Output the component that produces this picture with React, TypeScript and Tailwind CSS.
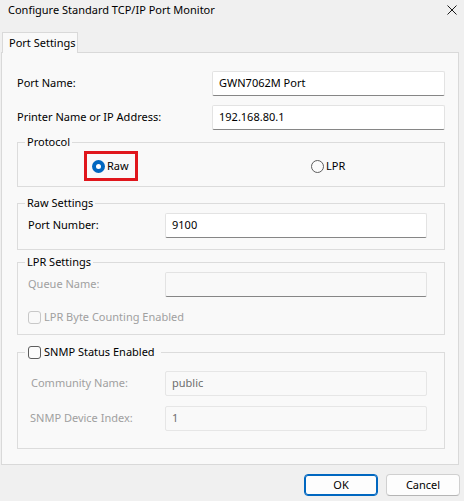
import React from "react";

const font = { fontFamily: '"Noto Sans", "Liberation Sans", sans-serif' };

function TextBox({ value, width, active = true, disabled = false }: { value?: string; width: string; active?: boolean; disabled?: boolean }) {
  const base = "h-[25px] flex items-center pl-[6px] rounded-[2px] border text-[11px] ";
  const look = disabled
    ? "bg-[#f9f9f9] border-[#e6e6e6] text-[#6d6d6d]"
    : active
    ? "bg-white border-[#e3e3e3] border-b-[#868686] text-black"
    : "bg-[#f9f9f9] border-[#e3e3e3] border-b-[#868686] text-black";
  return <div className={base + look + " " + width}>{value}</div>;
}

function Group({ title, legend, className, children }: { title?: string; legend?: React.ReactNode; className: string; children?: React.ReactNode }) {
  return (
    <div className={"relative border border-[#dcdcdc] " + className}>
      <div className="absolute -top-[9px] left-[7px] bg-[#f9f9f9] px-[2px] text-[11px] leading-[16px] text-black flex items-center whitespace-nowrap">
        {legend ?? title}
      </div>
      {children}
    </div>
  );
}

function CheckBox({ disabled = false }: { disabled?: boolean }) {
  return (
    <span
      className={
        "inline-block w-[13px] h-[13px] rounded-[3px] border shrink-0 " +
        (disabled ? "border-[#c8c8c8] bg-[#f9f9f9]" : "border-[#5d5d5d] bg-[#fbfbfb]")
      }
    />
  );
}

export default function App() {
  return (
    <div className="w-[464px] h-[501px] bg-[#f0f0f0] flex flex-col text-black overflow-hidden" style={font}>
      {/* title bar */}
      <div className="h-[32px] flex items-start pt-[2px] pl-[8px] pr-[7px]">
        <span className="text-[11px] leading-[16px] flex-1 whitespace-nowrap">Configure Standard TCP/IP Port Monitor</span>
        <svg width="10" height="10" viewBox="0 0 10 10" className="mt-[3px]">
          <path d="M0.5 0.5 L9.5 9.5 M9.5 0.5 L0.5 9.5" stroke="#1a1a1a" strokeWidth="1" fill="none" />
        </svg>
      </div>

      {/* tab strip */}
      <div className="flex pl-[2px] h-[21px] relative z-10">
        <div className="w-[76px] h-[21px] border border-b-0 border-[#d9d9d9] bg-[#f9f9f9] text-[11px] leading-[16px] pl-[6px] pt-[2px] whitespace-nowrap">
          Port Settings
        </div>
      </div>

      {/* tab page */}
      <div className="ml-[1px] w-[458px] h-[413px] -mt-px border border-[#d9d9d9] bg-[#f9f9f9] pt-[18px] pl-[15px] pr-[13px] text-[11px]">
        <div className="flex items-center h-[25px]">
          <span className="flex-1">Port Name:</span>
          <TextBox value="GWN7062M Port" width="w-[233px]" />
        </div>
        <div className="flex items-center h-[25px] mt-[9px]">
          <span className="flex-1">Printer Name or IP Address:</span>
          <TextBox value="192.168.80.1" width="w-[233px]" />
        </div>

        <Group title="Protocol" className="mt-[12px] h-[45px]">
          <div className="flex items-start pt-[8px]">
            <div className="ml-[66px] w-[54px] h-[30px] border-[3px] border-[#e0161c] flex items-center pl-[5px]">
              <span className="w-[13px] h-[13px] rounded-full bg-[#0067c0] flex items-center justify-center shrink-0">
                <span className="w-[5px] h-[5px] rounded-full bg-white" />
              </span>
              <span className="ml-[2px] leading-[16px]">Raw</span>
            </div>
            <div className="ml-[173px] h-[30px] flex items-center">
              <span className="w-[13px] h-[13px] rounded-full border border-[#5d5d5d] bg-[#fbfbfb] shrink-0" />
              <span className="ml-[2px] leading-[16px]">LPR</span>
            </div>
          </div>
        </Group>

        <Group title="Raw Settings" className="mt-[16px] h-[47px]">
          <div className="flex items-center pl-[10px] pt-[9px]">
            <span className="w-[137px]">Port Number:</span>
            <TextBox value="9100" width="w-[262px]" />
          </div>
        </Group>

        <Group title="LPR Settings" className="mt-[12px] h-[73px]">
          <div className="flex items-center pl-[10px] pt-[9px] text-[#a0a0a0]">
            <span className="w-[137px]">Queue Name:</span>
            <TextBox width="w-[262px]" active={false} />
          </div>
          <div className="flex items-center pl-[10px] mt-[12px] text-[#a0a0a0]">
            <CheckBox disabled />
            <span className="ml-[3px] leading-[16px]">LPR Byte Counting Enabled</span>
          </div>
        </Group>

        <Group
          className="mt-[17px] h-[97px]"
          legend={
            <span className="flex items-center pl-[1px] pr-[4px]">
              <CheckBox />
              <span className="ml-[3px]">SNMP Status Enabled</span>
            </span>
          }
        >
          <div className="flex items-center pl-[13px] pt-[18px] text-[#a0a0a0]">
            <span className="w-[134px]">Community Name:</span>
            <TextBox value="public" width="w-[262px]" disabled />
          </div>
          <div className="flex items-center pl-[12px] mt-[10px] text-[#a0a0a0]">
            <span className="w-[135px]">SNMP Device Index:</span>
            <TextBox value="1" width="w-[262px]" disabled />
          </div>
        </Group>
      </div>

      {/* dialog buttons */}
      <div className="flex justify-end gap-[8px] pr-[4px] mt-[9px]">
        <button className="w-[74px] h-[22px] rounded-[4px] border border-[#0067c0] bg-[#fdfdfd] text-[11px] leading-[16px] shadow-[inset_0_0_0_1px_#0067c0]">
          OK
        </button>
        <button className="w-[74px] h-[22px] rounded-[4px] border border-[#d0d0d0] border-b-[#b5b5b5] bg-[#fdfdfd] text-[11px] leading-[16px]">
          Cancel
        </button>
      </div>
    </div>
  );
}
